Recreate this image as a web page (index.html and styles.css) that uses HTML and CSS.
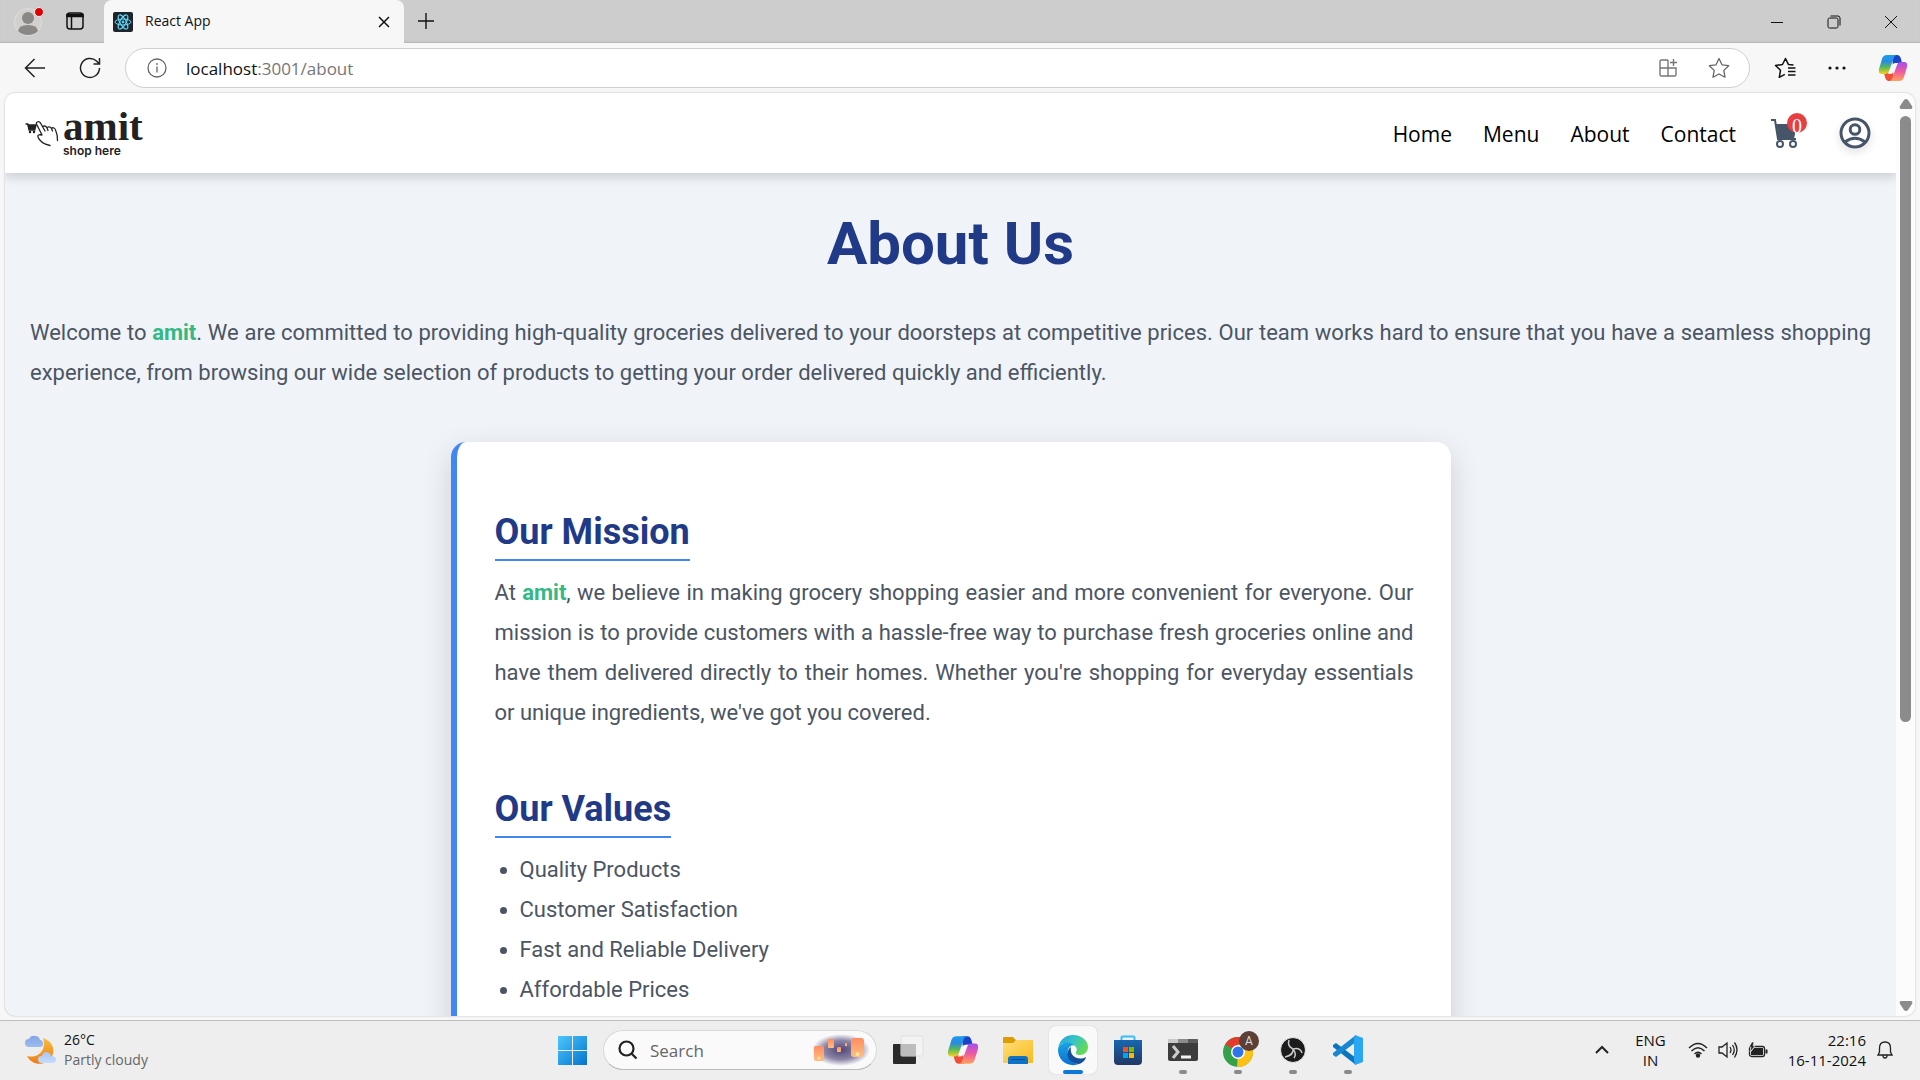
FILE: index.html
```html
<!DOCTYPE html>
<html lang="en">
<head>
<meta charset="utf-8">
<title>React App</title>
<link rel="stylesheet" href="styles.css">
</head>
<body>
<svg class="defs" aria-hidden="true">
  <defs>
    <linearGradient id="cpA" x1="0" y1="0" x2="0" y2="1"><stop offset="0" stop-color="#1b9cf0"/><stop offset=".35" stop-color="#2b8be0"/><stop offset=".65" stop-color="#59b95a"/><stop offset="1" stop-color="#f6d11c"/></linearGradient>
    <linearGradient id="cpB" x1="0" y1="0" x2="0" y2="1"><stop offset="0" stop-color="#a34df0"/><stop offset=".5" stop-color="#ee5aa0"/><stop offset="1" stop-color="#ffa25a"/></linearGradient>
    <symbol id="copilot" viewBox="0 0 30 30">
      <path d="M14 2h5q3 0 4 4l1 4h-4q-4 0-5 4z" fill="#1744c8"/>
      <path d="M16 28h-5q-3 0-4-4l-1-4h4q4 0 5-4z" fill="#ef4f36"/>
      <path d="M9 2h9q-2 1-3 5l-4 11q-1 3-4 3H4q-4 0-3-5L4 6q1-4 5-4z" fill="url(#cpA)"/>
      <path d="M21 28h-9q2-1 3-5l4-11q1-3 4-3h3q4 0 3 5l-3 10q-1 4-5 4z" fill="url(#cpB)"/>
      <path d="M17 10h3q-1 1-2 3l-2 5q-1 3-4 3h-2q1-1 2-3l2-5q1-3 3-3z" fill="#f7f7f7"/>
    </symbol>
  </defs>
</svg>

<div class="tabstrip">
  <div class="tabstrip-tools">
    <button class="icon-btn profile" aria-label="Profile">
      <svg width="30" height="30" viewBox="0 0 30 30"><circle cx="14" cy="16" r="13.500" fill="#d2d0cf" stroke="#dedede"/><circle cx="14" cy="12" r="6" fill="#8a8785"/><path d="M4 25q1-6 10-6t10 6q-4 4-10 4t-10-4z" fill="#8a8785"/><circle cx="25" cy="6" r="4.500" fill="#e00000" stroke="#efefef"/></svg>
    </button>
    <button class="icon-btn" aria-label="Tab actions">
      <svg width="20" height="20" viewBox="0 0 20 20" fill="none" stroke="#111" stroke-width="1.500"><rect x="2" y="2" width="16" height="16" rx="3"/><path d="M2 3.500h16v2H2zM6.500 5v13" fill="#111"/></svg>
    </button>
  </div>
  <div class="tab">
    <svg width="20" height="20" viewBox="0 0 20 20" fill="none" stroke="#61dafb"><rect width="20" height="20" rx="2" fill="#20232a" stroke="none"/><ellipse cx="10" cy="10" rx="8" ry="3"/><ellipse cx="10" cy="10" rx="8" ry="3" transform="rotate(60 10 10)"/><ellipse cx="10" cy="10" rx="8" ry="3" transform="rotate(120 10 10)"/><circle cx="10" cy="10" r="1" fill="#61dafb"/></svg>
    <span class="tab-title">React App</span>
    <button class="icon-btn" aria-label="Close tab"><svg width="12" height="12" viewBox="0 0 12 12" stroke="#111" stroke-width="1.500"><path d="M1 1l10 10M11 1L1 11"/></svg></button>
  </div>
  <button class="icon-btn new-tab" aria-label="New tab"><svg width="18" height="18" viewBox="0 0 18 18" stroke="#111" stroke-width="1.400"><path d="M9 1v16M1 9h16"/></svg></button>
  <div class="window-controls">
    <button class="icon-btn" aria-label="Minimize"><svg width="14" height="14" viewBox="0 0 14 14" stroke="#111"><path d="M1 7.500h12"/></svg></button>
    <button class="icon-btn" aria-label="Restore"><svg width="14" height="14" viewBox="0 0 14 14" fill="none" stroke="#111"><rect x="1" y="3" width="10" height="10" rx="1.500"/><path d="M3.500 1h7.500q2 0 2 2v7.500"/></svg></button>
    <button class="icon-btn" aria-label="Close"><svg width="14" height="14" viewBox="0 0 14 14" stroke="#111"><path d="M1 1l12 12M13 1L1 13"/></svg></button>
  </div>
</div>

<div class="toolbar">
  <div class="nav-buttons">
    <button class="icon-btn" aria-label="Back"><svg width="22" height="20" viewBox="0 0 22 20" fill="none" stroke="#222" stroke-width="1.500"><path d="M21 10H2M10.500 1L1.500 10l9 9"/></svg></button>
    <button class="icon-btn" aria-label="Refresh"><svg width="22" height="22" viewBox="0 0 22 22" fill="none" stroke="#222" stroke-width="1.500"><path d="M20.500 11a9.500 9.500 0 1 1-3-7l2.500 2.500M20.500 1v6h-6"/></svg></button>
  </div>
  <div class="address">
    <svg width="20" height="20" viewBox="0 0 20 20" fill="none" stroke="#666" stroke-width="1.300"><circle cx="10" cy="10" r="9"/><path d="M10 8.500v6M10 5v2"/></svg>
    <span class="url"><b>localhost</b>:3001/about</span>
    <button class="icon-btn" aria-label="App available"><svg width="20" height="20" viewBox="0 0 20 20" fill="none" stroke="#767676" stroke-width="1.400"><path d="M10 2H3.500Q2 2 2 3.500v13Q2 18 3.500 18h13q1.500 0 1.500-1.500V10H2M10 2v16M15.500 1v7M12 4.500h7"/></svg></button>
    <button class="icon-btn" aria-label="Favourite"><svg width="22" height="22" viewBox="0 0 22 22" fill="none" stroke="#666" stroke-width="1.300" stroke-linejoin="round"><path d="M11 1.500l3 6.300 6.700.9-4.900 4.700 1.200 6.800-6-3.200-6 3.200 1.200-6.800L1.300 8.700 8 7.800z"/></svg></button>
  </div>
  <div class="toolbar-end">
    <button class="icon-btn" aria-label="Favourites"><svg width="22" height="22" viewBox="0 0 22 22" fill="none" stroke="#111" stroke-width="1.500" stroke-linejoin="round"><path d="M19.500 8l-5-.4-3-6.100-3 6-7 1 5 4.800-1.200 7 5.500-3M14 11h7.500M14 14.500h7.500M14 18h7.500"/></svg></button>
    <button class="icon-btn" aria-label="More"><svg width="18" height="4" viewBox="0 0 18 4" fill="#111"><circle cx="2" cy="2" r="1.600"/><circle cx="9" cy="2" r="1.600"/><circle cx="16" cy="2" r="1.600"/></svg></button>
    <button class="icon-btn" aria-label="Copilot"><svg width="30" height="30"><use href="#copilot"/></svg></button>
  </div>
</div>

<div class="viewport">
  <div class="page">
    <header class="site-header">
      <a class="logo" href="#" aria-label="amit shop here">
        <svg width="34" height="28" viewBox="0 0 34 28" fill="none" stroke="#222" stroke-width="1.300" stroke-linejoin="round" stroke-linecap="round"><path d="M1 5h2l1 6h6"/><path d="M3 6h8l-1 4H4z" fill="#222"/><circle cx="5" cy="13" r=".6" fill="#222"/><circle cx="9" cy="13" r=".6" fill="#222"/><path d="M20 12L15.500 4q-1.500-2-3.200-1Q10.500 4 12 6l5 10q-5-1-4 2 2 6 12 8.500M17.500 7.500q3-1.500 4.500 1.500l1 2.500M22 8.500q3-1.500 4.500 1l1 2.500M26.500 9q3-1 4 2 2 4 2 10.500"/></svg>
        <span class="logo-text"><span class="logo-name">amit</span><span class="logo-tag">shop here</span></span>
      </a>
      <nav class="site-nav">
        <a href="#">Home</a><a href="#">Menu</a><a href="#">About</a><a href="#">Contact</a>
      </nav>
      <button class="icon-btn cart" aria-label="Cart">
        <svg width="28" height="30" viewBox="0 0 28 30"><path d="M0 2h4l3 19h18" fill="none" stroke="#475569" stroke-width="2"/><path d="M5 6h21l-3 15H7z" fill="#475569"/><g fill="none" stroke="#475569" stroke-width="2"><circle cx="9" cy="26" r="3"/><circle cx="22" cy="26" r="3"/></g></svg>
        <span class="badge">0</span>
      </button>
      <button class="icon-btn account" aria-label="Account">
        <svg width="32" height="32" viewBox="0 0 32 32" fill="none" stroke="#475569" stroke-width="3"><circle cx="16" cy="16" r="14"/><circle cx="16" cy="12.500" r="4.800"/><path d="M6 25q10-7.500 20 0"/></svg>
      </button>
    </header>
    <main class="about">
      <h1>About Us</h1>
      <p class="intro">Welcome to <strong>amit</strong>. We are committed to providing high-quality groceries delivered to your doorsteps at competitive prices. Our team works hard to ensure that you have a seamless shopping experience, from browsing our wide selection of products to getting your order delivered quickly and efficiently.</p>
      <div class="card">
        <section>
          <h2>Our Mission</h2>
          <p>At <strong>amit</strong>, we believe in making grocery shopping easier and more convenient for everyone. Our mission is to provide customers with a hassle-free way to purchase fresh groceries online and have them delivered directly to their homes. Whether you're shopping for everyday essentials or unique ingredients, we've got you covered.</p>
        </section>
        <section>
          <h2>Our Values</h2>
          <ul>
            <li>Quality Products</li>
            <li>Customer Satisfaction</li>
            <li>Fast and Reliable Delivery</li>
            <li>Affordable Prices</li>
          </ul>
        </section>
      </div>
    </main>
  </div>
  <div class="scrollbar" aria-hidden="true">
    <svg width="14" height="10" viewBox="0 0 14 10"><path d="M7 0q1 0 2 1l4 6q1 3-1 3H2q-2 0-1-3l4-6q1-1 2-1z" fill="#8b8b8b"/></svg>
    <div class="track"><div class="thumb"></div></div>
    <svg width="14" height="10" viewBox="0 0 14 10"><path d="M7 10q1 0 2-1l4-6q1-3-1-3H2Q0 0 1 3l4 6q1 1 2 1z" fill="#8b8b8b"/></svg>
  </div>
</div>

<footer class="taskbar">
  <div class="weather">
    <svg width="32" height="32" viewBox="0 0 32 32"><defs><linearGradient id="moon" x1="0" y1="0" x2="0" y2="1"><stop offset="0" stop-color="#f6bd3a"/><stop offset="1" stop-color="#ef7d1a"/></linearGradient><linearGradient id="cloud" x1="0" y1="0" x2="0" y2="1"><stop offset="0" stop-color="#82a5e8"/><stop offset="1" stop-color="#c5dcfb"/></linearGradient></defs><path d="M19 4c10 3 13 13 8 20-6 8-19 8-24-2 11 3 20-6 16-18z" fill="url(#moon)"/><path d="M5 13q-4 0-4-4t4-4q2-4 6-3 4 0 5 4 3 0 3 4 0 3-3 3zM18 29q-4 0-4-4 0-3 4-3 1-4 4-4 4 0 5 4 5 0 5 4 0 3-4 3z" fill="url(#cloud)"/></svg>
    <div class="weather-text"><span>26°C</span><span class="muted">Partly cloudy</span></div>
  </div>
  <div class="apps">
    <button class="app" aria-label="Start"><svg width="30" height="30" viewBox="0 0 30 30"><defs><linearGradient id="win" x1="0" y1="0" x2="1" y2="1"><stop offset="0" stop-color="#4cc8fb"/><stop offset="1" stop-color="#0672cf"/></linearGradient></defs><path d="M1 1h14v14H1zM16 1h14v14H16zM1 16h14v14H1zM16 16h14v14H16z" fill="url(#win)"/></svg></button>
    <label class="search">
      <svg width="20" height="20" viewBox="0 0 20 20" fill="none" stroke="#222" stroke-width="2.200"><circle cx="8.500" cy="8.500" r="7"/><path d="M13.500 13.500l5 5"/></svg>
      <input type="text" placeholder="Search" aria-label="Search">
      <svg width="58" height="32" viewBox="0 0 58 32"><defs><radialGradient id="sky"><stop offset="0" stop-color="#4f4674"/><stop offset=".6" stop-color="#8d86a8"/><stop offset="1" stop-color="#fafafa"/></radialGradient><linearGradient id="lamp" x1="0" y1="0" x2="0" y2="1"><stop offset="0" stop-color="#ff8d62"/><stop offset="1" stop-color="#ffbe83"/></linearGradient></defs><ellipse cx="29" cy="16" rx="29" ry="16" fill="url(#sky)"/><g fill="url(#lamp)"><rect x="2" y="12" width="10" height="15" rx="2"/><rect x="16" y="5" width="6" height="9" rx="1"/><rect x="25" y="13" width="4" height="5" rx="1"/><rect x="33" y="9" width="2" height="3"/><rect x="39" y="4" width="13" height="19" rx="3"/></g><circle cx="45.500" cy="20" r="2" fill="#ffe9a0"/><circle cx="7" cy="24" r="1.500" fill="#ffe9a0"/></svg>
    </label>
    <button class="app" aria-label="Task view"><svg width="32" height="30" viewBox="0 0 32 30"><rect x="1" y="9" width="23" height="20" rx="1" fill="#2b2b2b"/><rect x="9" y="1" width="22" height="20" rx="1" fill="#f4f4f4" fill-opacity=".8" stroke="#e0e0e0"/><path d="M9 9h15v12H9z" fill="#bdbdbd"/></svg></button>
    <button class="app" aria-label="Copilot"><svg width="32" height="32"><use href="#copilot"/></svg></button>
    <button class="app" aria-label="File Explorer"><svg width="32" height="30" viewBox="0 0 32 30"><defs><linearGradient id="fold" x1="0" y1="0" x2="1" y2="1"><stop offset="0" stop-color="#ffe07a"/><stop offset="1" stop-color="#f8b91c"/></linearGradient></defs><path d="M1 3q0-1 1-1h9l3 3h15q2 0 2 2v3H1z" fill="#dd9b08"/><path d="M1 8h10l3-3h17v23H1z" fill="url(#fold)"/><path d="M6 29v-5q0-3 3-3h14q3 0 3 3v5z" fill="#0f74c6"/><path d="M9 24.500h14" stroke="#0a4f91"/></svg></button>
    <button class="app app-active" aria-label="Edge"><svg width="32" height="32" viewBox="0 0 32 32"><defs><linearGradient id="edA" x1="0" y1="0" x2="1" y2=".5"><stop offset="0" stop-color="#1e9bde"/><stop offset=".5" stop-color="#35c3cb"/><stop offset="1" stop-color="#63d957"/></linearGradient><linearGradient id="edB" x1="0" y1="0" x2="0" y2="1"><stop offset="0" stop-color="#1aa4e4"/><stop offset="1" stop-color="#0b6fd0"/></linearGradient></defs><path d="M1 14C3 5 9 1 16 1c9 0 15 6 15 12 0 5-4 8-8 8-3 0-5-1-4-3 2-3 0-7-4-7C8 7 2 10 1 14z" fill="url(#edA)"/><path d="M1 16C1 9 11 6 17 11c-4 0-7 4-6 9 1 6 6 10 11 10C12 34 1 27 1 16z" fill="url(#edB)"/><path d="M14 13c-5 3-6 16 8 17 4-1 7-5 7-7-7 4-17 0-15-10z" fill="#134f9c"/></svg></button>
    <button class="app" aria-label="Microsoft Store"><svg width="30" height="32" viewBox="0 0 30 32"><defs><linearGradient id="store" x1="0" y1="0" x2="0" y2="1"><stop offset="0" stop-color="#1667b3"/><stop offset="1" stop-color="#213862"/></linearGradient></defs><path d="M8.500 8V3.500q0-1 1-1h11q1 0 1 1V8" fill="none" stroke="#38bdf4" stroke-width="2"/><path d="M1 6h28v21q0 4-4 4H5q-4 0-4-4z" fill="url(#store)"/><path d="M10 13h5v5h-5z" fill="#f25022"/><path d="M16 13h5v5h-5z" fill="#7fba00"/><path d="M10 19h5v5h-5z" fill="#00a4ef"/><path d="M16 19h5v5h-5z" fill="#ffb900"/></svg></button>
    <button class="app app-open" aria-label="Terminal"><svg width="32" height="24" viewBox="0 0 32 24"><rect x="1" y="1" width="30" height="22" rx="2" fill="#3c3c3c"/><path d="M1 5V2q0-1 1-1h9v4z" fill="#c8c8c8"/><path d="M11 1h10v4H11z" fill="#8c8c8c"/><path d="M21 1h9q1 0 1 1v3H21z" fill="#5c5c5c"/><path d="M6 8l5 6-5 6" fill="none" stroke="#ccc" stroke-width="3"/><path d="M14 17.500h10v3H14z" fill="#f2f2f2"/></svg></button>
    <button class="app app-open" aria-label="Chrome"><svg width="42" height="38" viewBox="-4 0 42 38"><circle cx="17" cy="21" r="15" fill="#34a047"/><path d="M17 21L4 13.500A15 15 0 0 1 30 13.500z" fill="#e33b2e"/><path d="M17 21l-1 15a15 15 0 0 0 14-22.500H17z" fill="#fbc116"/><path d="M4 13.500l7 11 6-3.500z" fill="#34a047"/><circle cx="17" cy="21" r="7" fill="#fff"/><circle cx="17" cy="21" r="5.500" fill="#2f74e8"/><circle cx="28" cy="10" r="10" fill="#5b4038"/><text x="28" y="14" class="avatar-letter">A</text></svg></button>
    <button class="app app-open" aria-label="OBS"><svg width="28" height="28" viewBox="0 0 28 28" fill="none" stroke="#c8c8c8" stroke-width="1.500"><circle cx="14" cy="14" r="12.500" fill="#1b1b1d" stroke="#e8e8e8" stroke-width="1"/><path d="M10 4q-2 6 4 9 7-2 9 4M14 13q1 6-8 8M14 13q4 5 1 9"/></svg></button>
    <button class="app app-open" aria-label="Visual Studio Code"><svg width="32" height="32" viewBox="0 0 32 32"><path d="M1 11l3-2 20 15v7L1 13z" fill="#0b74bd"/><path d="M1 21l3 2L24 8V1L1 19z" fill="#1687d0"/><path d="M23 1l8 3v24l-8 3-1-4V5z" fill="#29a7f2"/></svg></button>
  </div>
  <div class="tray">
    <svg width="14" height="10" viewBox="0 0 14 10" fill="none" stroke="#222" stroke-width="2"><path d="M1 8l6-6 6 6"/></svg>
    <span class="lang">ENG<br>IN</span>
    <div class="status">
      <svg width="20" height="16" viewBox="0 0 20 16" fill="none" stroke="#222" stroke-width="1.400"><path d="M1 6q9-9 18 0M3.500 9q6.500-6.500 13 0M6.500 12q3.500-3.500 7 0"/><circle cx="10" cy="13.500" r="1.500" fill="#222"/></svg>
      <svg width="20" height="18" viewBox="0 0 20 18" fill="none" stroke="#222" stroke-width="1.300"><path d="M1 6h3l5-4v14l-5-4H1zM12 6q2 3 0 6M14.500 4q3.500 5 0 10M16.500 1.500q5 7 0 15"/></svg>
      <svg width="20" height="16" viewBox="0 0 20 16"><rect x="1.500" y="4.500" width="15" height="10" rx="2" fill="none" stroke="#222" stroke-width="1.300"/><path d="M6 6h9v7H3V10zM17.500 7.500h2v4h-2z" fill="#222"/><path d="M4 0L1 5h2L2 10l5-6H5l1-4z" fill="#222" stroke="#eee" stroke-width=".6"/></svg>
    </div>
    <span class="clock">22:16<br>16-11-2024</span>
    <svg width="16" height="18" viewBox="0 0 16 18" fill="none" stroke="#222" stroke-width="1.300"><path d="M1 14l1.500-3V7q0-6 5.500-6t5.500 6v4l1.500 3zM6 14.500q0 2.500 2 2.500t2-2.500"/></svg>
  </div>
</footer>
</body>
</html>
```
FILE: styles.css
```css
* { box-sizing: border-box; }

body {
  margin: 0;
  height: 100vh;
  display: flex;
  flex-direction: column;
  overflow: hidden;
  background: #f7f7f7;
  color: #111;
  font-family: "Open Sans", "Noto Sans", sans-serif;
}

svg { display: block; flex: none; }

.defs { position: absolute; width: 0; height: 0; }

.icon-btn {
  display: flex;
  align-items: center;
  justify-content: center;
  padding: 0;
  border: 0;
  background: none;
  flex: none;
}

/* Tab strip */
.tabstrip {
  display: flex;
  align-items: center;
  height: 43px;
  background: #cdcdcd;
  box-shadow: inset 0 -2px 2px -1px #b4b4b4;
  flex: none;
}

.tabstrip-tools {
  display: flex;
  align-items: center;
  justify-content: space-between;
  width: 104px;
  padding: 0 19px 2px 14px;
}

.tab {
  display: flex;
  align-items: center;
  gap: 12px;
  width: 300px;
  height: 43px;
  padding: 0 14px 0 9px;
  background: #f7f7f7;
  border-radius: 8px 8px 0 0;
}

.tab-title { flex: 1; padding-bottom: 2px; font-size: 14px; }

.new-tab { width: 44px; padding-bottom: 2px; }

.window-controls {
  display: flex;
  gap: 43px;
  margin-left: auto;
  padding-right: 22px;
}

/* Toolbar */
.toolbar {
  display: flex;
  align-items: center;
  height: 50px;
  flex: none;
}

.nav-buttons {
  display: flex;
  align-items: center;
  gap: 33px;
  width: 125px;
  padding-left: 24px;
}

.address {
  display: flex;
  align-items: center;
  gap: 30px;
  flex: 1;
  height: 40px;
  padding: 0 19px 0 21px;
  border: 1px solid #cfcfcf;
  border-radius: 20px;
  background: #fff;
}

.url { flex: 1; margin-left: -11px; font-size: 17px; color: #767676; }
.url b { font-weight: 400; color: #111; }

.toolbar-end {
  display: flex;
  align-items: center;
  gap: 32px;
  padding: 0 12px 0 24px;
}

/* Page viewport */
.viewport {
  display: flex;
  flex: 1;
  min-height: 0;
  margin: 0 5px 4px;
  overflow: hidden;
  border-radius: 10px;
  background: #f0f3f8;
  box-shadow: 0 0 2px #b0b0b0;
}

.page { flex: 1; min-width: 0; overflow: hidden; }

.scrollbar {
  display: flex;
  flex-direction: column;
  align-items: center;
  gap: 7px;
  width: 19px;
  padding: 6px 0 5px;
  background: #fcfcfc;
}

.track { flex: 1; }
.thumb { width: 11px; height: 69%; border-radius: 6px; background: #8b8b8b; }

/* Site header */
.site-header {
  position: relative;
  display: flex;
  align-items: center;
  height: 80px;
  padding: 0 25px 0 20px;
  background: #fff;
  box-shadow: 0 4px 10px rgba(0, 0, 0, 0.16);
}

.logo {
  display: flex;
  align-items: center;
  gap: 4px;
  color: #222;
  text-decoration: none;
}

.logo-text { display: flex; flex-direction: column; }
.logo-name { font: bold 41px/36px "Liberation Serif", serif; }
.logo-tag { font: 600 12px/14px Inter, sans-serif; }

.site-nav { display: flex; gap: 31px; margin: 0 35px 0 auto; padding-top: 1px; }
.site-nav a { color: #000; font-size: 21px; text-decoration: none; }

.cart { position: relative; margin-right: 40px; }

.badge {
  position: absolute;
  top: -5px;
  right: -8px;
  width: 20px;
  height: 20px;
  border-radius: 50%;
  background: #e84040;
  color: #fff;
  font: 20px/26px "Liberation Serif", serif;
}

.account { border-radius: 50%; box-shadow: 0 4px 8px rgba(0, 0, 0, 0.1); }

/* About page */
.about {
  padding: 31px 25px;
  color: #4b5563;
  font: 22px/40px Roboto, sans-serif;
}

h1, h2 { margin: 0; color: #213a87; font-weight: 700; }
h1 { font-size: 60px; line-height: 80px; text-align: center; }
p { margin: 0; text-align: justify; }
strong { color: #34b886; font-weight: 700; }

.intro { margin-top: 29px; }

.card {
  max-width: 1000px;
  margin: 49px auto 0;
  padding: 62px 37px 40px 38px;
  border-left: 6px solid #4285f4;
  border-radius: 15px;
  background: #fff;
  box-shadow: 0 10px 30px rgba(0, 0, 0, 0.15);
}

.card section + section { margin-top: 48px; }

h2 {
  display: inline-block;
  margin-bottom: 12px;
  padding: 3px 0 2px;
  border-bottom: 2px solid #4285f4;
  font-size: 36px;
  line-height: 50px;
}

ul { margin: 0; padding-left: 25px; }

/* Taskbar */
.taskbar {
  display: grid;
  grid-template-columns: 1fr auto 1fr;
  align-items: center;
  height: 60px;
  padding-bottom: 1px;
  border-top: 1px solid #bdbdbd;
  background: #eee;
  font-size: 14px;
  line-height: 20px;
  flex: none;
}

.weather { display: flex; align-items: center; gap: 8px; padding-left: 24px; }
.weather-text { display: flex; flex-direction: column; }
.muted { color: #666; }

.apps { display: flex; align-items: center; gap: 7px; }

.app {
  position: relative;
  display: flex;
  align-items: center;
  justify-content: center;
  width: 48px;
  height: 48px;
  padding: 0;
  border: 0;
  border-radius: 6px;
  background: none;
}

.app-active { background: #f9f9f9; box-shadow: 0 0 1px #aaa; }

.app-active::after, .app-open::after {
  content: "";
  position: absolute;
  bottom: 0;
  left: 20px;
  width: 8px;
  height: 4px;
  border-radius: 2px;
  background: #8a8a8a;
}

.app-active::after { left: 14px; width: 20px; background: #0a78d4; }

.avatar-letter { fill: #ddd; font: 12px Roboto, sans-serif; text-anchor: middle; }

.search {
  display: flex;
  align-items: center;
  gap: 12px;
  width: 274px;
  height: 40px;
  padding: 0 6px 0 14px;
  border: 1px solid #d8d8d8;
  border-bottom-color: #bbb;
  border-radius: 20px;
  background: #fafafa;
}

.search input {
  flex: 1;
  min-width: 0;
  padding: 0;
  border: 0;
  outline: 0;
  background: none;
  font: 17px "Open Sans", sans-serif;
}

.search input::placeholder { color: #666; opacity: 1; }

.tray {
  display: flex;
  align-items: center;
  justify-content: flex-end;
  padding-right: 27px;
  font-size: 15px;
}

.lang { margin: 0 22px 0 26px; text-align: center; }
.status { display: flex; align-items: center; gap: 10px; }
.clock { margin: 0 11px 0 20px; text-align: right; }
```
